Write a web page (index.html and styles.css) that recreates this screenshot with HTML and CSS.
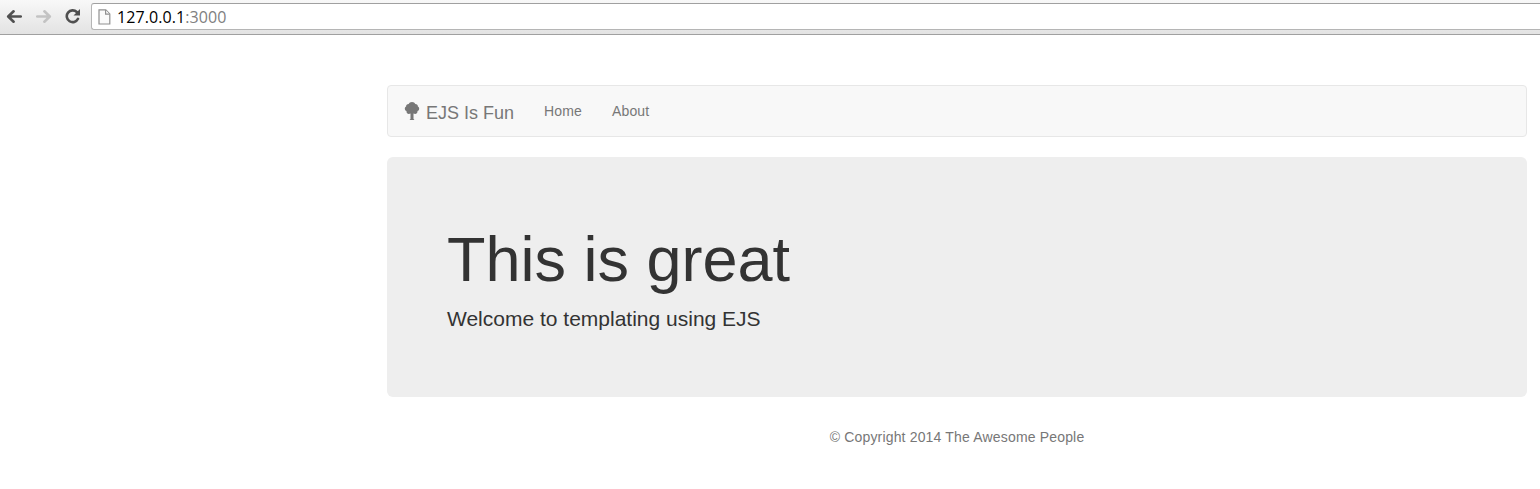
FILE: index.html
```html
<!DOCTYPE html>
<html lang="en">
<head>
<meta charset="utf-8">
<title>EJS Is Fun</title>
<link rel="stylesheet" href="styles.css">
</head>
<body>
<div class="toolbar">
  <svg class="tool back" width="16" height="14" viewBox="0 0 16 14"><path d="M14.800 7.500H3M7.600 2.300L2.200 7.500l5.400 5.200"/></svg>
  <svg class="tool forward" width="16" height="14" viewBox="0 0 16 14"><path d="M1.200 7.500H13M8.400 2.300L13.800 7.500l-5.400 5.200"/></svg>
  <svg class="tool reload" width="16" height="16" viewBox="0 0 16 16"><path d="M13 10.800A5.900 5.900 0 1 1 11.800 4"/><path class="head" d="M15 1V7.500H8.500z"/></svg>
  <div class="omnibox">
    <svg class="page-icon" width="13" height="16" viewBox="0 0 13 16"><path d="M1 .8h6.800l4 4.200v10H1z"/><path d="M7.600 1v4.200h4"/></svg>
    <span class="url">127.0.0.1<span class="port">:3000</span></span>
  </div>
</div>
<div class="container">
  <nav class="navbar">
    <a class="brand"><svg class="tree" width="18" height="18" viewBox="0 0 18 18"><path d="M9 0c1.600 0 2.800.8 3.300 2 1.700 0 2.700 1 2.600 2.400 1.100.6 1.500 1.700 1.200 2.800-.2 1-.8 1.600-1.600 1.900.2 1.700-.8 2.900-2.300 2.900-.6 0-1.200-.2-1.700-.5V17l.7.400v.6H6.800v-.6l.7-.4v-5.500c-.5.300-1.100.5-1.700.5-1.500 0-2.500-1.200-2.300-2.900-.8-.3-1.400-.9-1.600-1.900-.3-1.100.1-2.200 1.200-2.800C3 3 4 2 5.700 2 6.200.8 7.400 0 9 0z"/></svg><span>EJS Is Fun</span></a>
    <a class="link">Home</a>
    <a class="link">About</a>
  </nav>
  <main class="jumbotron">
    <h1>This is great</h1>
    <p>Welcome to templating using EJS</p>
  </main>
  <footer class="footer">© Copyright 2014 The Awesome People</footer>
</div>
</body>
</html>
```
FILE: styles.css
```css
* { box-sizing: border-box; }
body {
  margin: 0;
  background: #fff;
  color: #333;
  font: 14px/20px "Liberation Sans", Arial, sans-serif;
  overflow: hidden;
}
.toolbar {
  display: flex;
  align-items: flex-start;
  height: 35px;
  padding: 3px 0 0 6px;
  background: linear-gradient(#f8f8f8, #e3e3e3);
  border-bottom: 1px solid #a0a0a0;
}
.tool {
  flex: none;
  fill: none;
  stroke: #505050;
  stroke-width: 2.6;
  stroke-linecap: round;
  stroke-linejoin: round;
}
.back { margin-top: 6px; }
.forward { margin: 6px 0 0 14px; stroke: #c3c3c3; }
.reload { margin: 5px 0 0 13px; }
.reload .head { fill: #505050; stroke: none; }
.omnibox {
  display: flex;
  flex: 1;
  height: 27px;
  margin-left: 10px;
  padding-left: 6px;
  background: #fff;
  border: 1px solid #b5b5b5;
  border-top-color: #a0a0a0;
  border-right: 0;
  border-radius: 3px 0 0 3px;
}
.page-icon { margin-top: 5px; fill: #fafafa; stroke: #909090; stroke-width: 1.2; }
.url {
  margin-left: 6px;
  color: #000;
  font: 16px/26px "Open Sans", "Noto Sans", sans-serif;
  letter-spacing: 0.08px;
}
.port { color: #808080; }
.container { width: 1140px; margin: 50px 0 0 387px; }
.navbar {
  display: flex;
  height: 52px;
  margin-bottom: 20px;
  background: #f8f8f8;
  border: 1px solid #e7e7e7;
  border-radius: 4px;
  color: #777;
}
.brand {
  display: flex;
  gap: 5px;
  padding: 17px 15px 0;
  font-size: 18px;
}
.tree { margin-top: -1px; fill: #777; }
.link { padding: 15px; letter-spacing: 0.15px; }
.jumbotron {
  height: 240px;
  padding: 68px 60px 48px;
  background: #eee;
  border-radius: 6px;
}
h1 { margin: 0 0 10px; font-size: 63px; font-weight: 500; line-height: 1.1; }
.jumbotron p { margin: 0; font-size: 21px; line-height: 30px; }
.footer { margin-top: 30px; color: #777; letter-spacing: 0.17px; text-align: center; }
```
